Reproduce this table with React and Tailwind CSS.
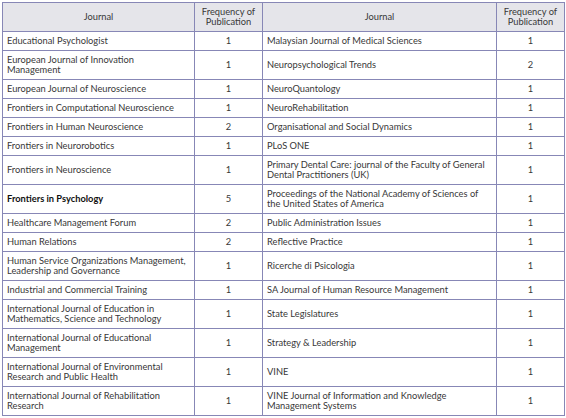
import React from "react";

const rows = [
  ["Educational Psychologist", "1", "Malaysian Journal of Medical Sciences", "1"],
  ["European Journal of Innovation\nManagement", "1", "Neuropsychological Trends", "2"],
  ["European Journal of Neuroscience", "1", "NeuroQuantology", "1"],
  ["Frontiers in Computational Neuroscience", "1", "NeuroRehabilitation", "1"],
  ["Frontiers in Human Neuroscience", "2", "Organisational and Social Dynamics", "1"],
  ["Frontiers in Neurorobotics", "1", "PLoS ONE", "1"],
  ["Frontiers in Neuroscience", "1", "Primary Dental Care: journal of the Faculty of General\nDental Practitioners (UK)", "1"],
  ["Frontiers in Psychology", "5", "Proceedings of the National Academy of Sciences of\nthe United States of America", "1", true],
  ["Healthcare Management Forum", "2", "Public Administration Issues", "1"],
  ["Human Relations", "2", "Reflective Practice", "1"],
  ["Human Service Organizations Management,\nLeadership and Governance", "1", "Ricerche di Psicologia", "1"],
  ["Industrial and Commercial Training", "1", "SA Journal of Human Resource Management", "1"],
  ["International Journal of Education in\nMathematics, Science and Technology", "1", "State Legislatures", "1"],
  ["International Journal of Educational\nManagement", "1", "Strategy & Leadership", "1"],
  ["International Journal of Environmental\nResearch and Public Health", "1", "VINE", "1"],
  ["International Journal of Rehabilitation\nResearch", "1", "VINE Journal of Information and Knowledge\nManagement Systems", "1"],
];

export default function App() {
  const td = "border border-[#8787b6] px-[4px] py-0 align-middle whitespace-pre-line";
  return (
    <div className="w-[566px] h-[418px] bg-white pt-[2px] pl-[2px]" style={{ fontFamily: "Lato, 'Open Sans', sans-serif" }}>
      <table className="border-collapse table-fixed w-[562px] text-[9.3px] leading-[10.5px] text-[#383838]">
        <colgroup>
          <col className="w-[192px]" />
          <col className="w-[68px]" />
          <col className="w-[234px]" />
          <col className="w-[68px]" />
        </colgroup>
        <thead>
          <tr className="bg-[#e5e5ea] h-[29px]">
            <th className={td + " font-normal text-center"}>Journal</th>
            <th className={td + " font-normal text-center"}>{"Frequency of\nPublication"}</th>
            <th className={td + " font-normal text-center"}>Journal</th>
            <th className={td + " font-normal text-center"}>{"Frequency of\nPublication"}</th>
          </tr>
        </thead>
        <tbody>
          {rows.map((r, i) => {
            const dbl = r[0].includes("\n") || r[2].includes("\n");
            return (
              <tr key={i} className={dbl ? "h-[29px]" : "h-[19px]"}>
                <td className={td + (r[4] ? " font-bold text-[#111]" : "")}>{r[0]}</td>
                <td className={td + " text-center"}>{r[1]}</td>
                <td className={td}>{r[2]}</td>
                <td className={td + " text-center"}>{r[3]}</td>
              </tr>
            );
          })}
        </tbody>
      </table>
    </div>
  );
}
